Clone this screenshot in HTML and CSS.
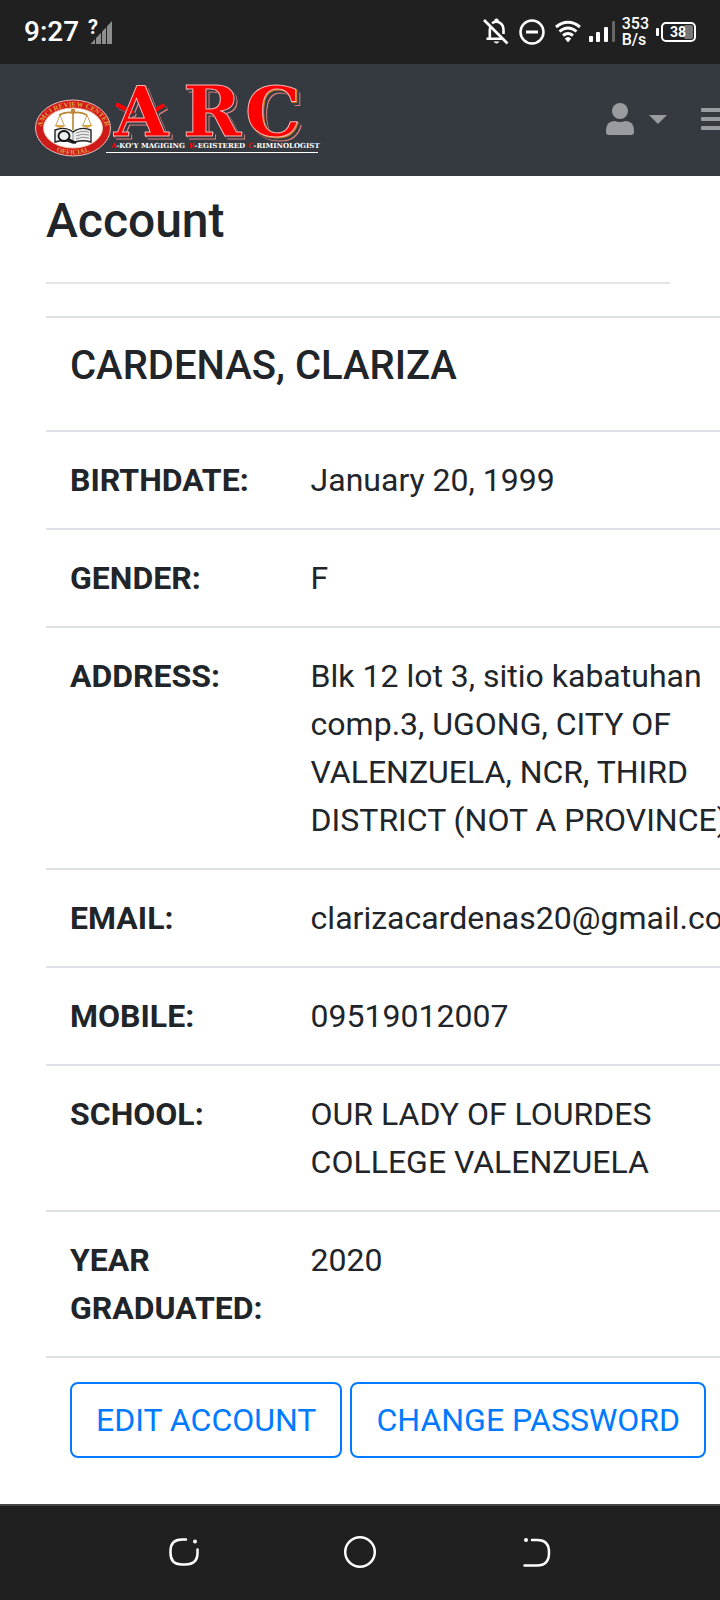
FILE: index.html
```html
<!DOCTYPE html>
<html lang="en">
<head>
<meta charset="utf-8">
<meta name="viewport" content="width=device-width, initial-scale=1">
<title>Account</title>
<link rel="stylesheet" href="styles.css">
</head>
<body>
<div class="status">
  <div class="status-group">
    <span class="clock">9:27</span>
    <svg width="24" height="26" viewBox="0 0 24 26" aria-hidden="true">
      <path d="M23 2V25H1.500Z" fill="#8d8d8d"/>
      <path d="M6.500 14V26M12.500 10V26M17.500 4V26" stroke="#202020" stroke-width="1"/>
      <text x="-1" y="15" class="signal-mark">?</text>
    </svg>
  </div>
  <div class="status-group status-right">
    <div class="status-group">
      <svg width="26" height="28" viewBox="0 0 26 28" fill="none" stroke="#fff" stroke-width="2.600" aria-hidden="true">
        <path d="M1 2 24.500 25.500"/>
        <path d="M3.500 20.800H19.500M6.800 20.500V12Q6.800 9.500 7.800 8M9 5.300Q13 2.300 17 4.800Q20.500 7 20.500 12V16"/>
        <path d="M11.500 3V1.500Q13.500-.5 15.500 1.500V4ZM10.500 23.500H16.500Q13.500 27.500 10.500 23.500Z" fill="#fff" stroke="none"/>
      </svg>
      <svg width="26" height="26" viewBox="0 0 26 26" fill="none" stroke="#fff" aria-hidden="true">
        <circle cx="13" cy="13" r="11.500" stroke-width="2.500"/><path d="M7 13H19" stroke-width="3"/>
      </svg>
      <svg width="26" height="22" viewBox="0 0 26 22" fill="none" stroke="#fff" stroke-width="2.900" aria-hidden="true">
        <path d="M1 6Q13-3.500 25 6M4.500 10.500Q13 3.500 21.500 10.500M8 14.500Q13 10.500 18 14.500"/>
        <path d="M9.800 17.500Q13 14.500 16.200 17.500L13 21.500Z" fill="#fff" stroke="none"/>
      </svg>
    </div>
    <svg width="27" height="22" viewBox="0 0 27 22" aria-hidden="true">
      <g fill="#fff"><rect x="1" y="15" width="4" height="6" rx="1"/><rect x="8" y="11" width="4" height="10" rx="1"/><rect x="16" y="6" width="4" height="15" rx="1"/></g>
      <rect x="24" y="0" width="3" height="21" rx="1" fill="#666"/>
    </svg>
    <div class="speed"><span>353</span><span>B/s</span></div>
    <svg width="40" height="20" viewBox="0 0 40 20" aria-hidden="true">
      <rect x="0" y="6" width="3" height="8" rx="1" fill="#fff"/>
      <rect x="28" y="3" width="9" height="14" rx="2" fill="#777"/>
      <rect x="6" y="1" width="33" height="18" rx="4" fill="none" stroke="#fff" stroke-width="2"/>
      <text x="22" y="15" class="battery-level">38</text>
    </svg>
  </div>
</div>

<header class="navbar">
  <a class="brand" href="#" aria-label="ARC home">
    <svg width="292" height="80" viewBox="0 -3 292 80">
      <defs>
        <path id="arc-top" d="M7.500 48A32 23.500 0 1 1 71.500 48"/>
        <path id="arc-bottom" d="M6 48A33 24.500 0 0 0 72 48"/>
      </defs>
      <ellipse cx="39" cy="46" rx="37.500" ry="28" fill="#cf1a1a" stroke="#e6c0c0"/>
      <ellipse cx="39" cy="46" rx="29.500" ry="20" fill="#fff" stroke="#f0c8b0" stroke-width="1"/>
      <text class="seal-text"><textPath href="#arc-top" startOffset="50%">AMCI REVIEW CENTER</textPath></text>
      <text class="seal-text"><textPath href="#arc-bottom" startOffset="50%">OFFICIAL</textPath></text>
      <g fill="none" stroke="#b98532" stroke-width="1.600">
        <path d="M39 28V48M25 33Q32 29 39 31Q46 29 53 33" />
        <path d="M26 33 22 43M26 33 30 43M53 33 49 43M53 33 57 43" stroke-width=".8"/>
        <path d="M20 43H32Q26 49 20 43ZM47 43H59Q53 49 47 43Z" fill="#d8a64b" stroke="none"/>
        <circle cx="39" cy="29" r="1.500"/>
      </g>
      <path d="M21 48Q31 44 39 50Q47 44 57 48V60Q47 57 39 61Q31 57 21 60Z" fill="#ededed" stroke="#222" stroke-width="1.400"/>
      <path d="M42 51Q48 48 55 50M42 54Q48 51 55 53M42 57Q48 54 55 56M39 50V61" fill="none" stroke="#777" stroke-width=".8"/>
      <ellipse cx="30" cy="54" rx="5.500" ry="5" fill="none" stroke="#111" stroke-width="1.800"/>
      <path d="M34 57 42 61" stroke="#111" stroke-width="2"/>
      <g class="mark">
        <path class="swash" d="M82 22 99 31M130 23 115 32"/>
        <text x="80" y="54">A</text>
        <text x="149" y="54">R</text>
        <text class="mark-last" x="211" y="54">C</text>
      </g>
      <g class="motto">
        <text x="77" y="66"><tspan class="initial">A</tspan>-KO'Y MAGIGING</text>
        <text x="155" y="66"><tspan class="initial">R</tspan>-EGISTERED</text>
        <text x="214" y="66"><tspan class="initial">C</tspan>-RIMINOLOGIST</text>
      </g>
      <path d="M72 70.500H284" stroke="#fff"/>
    </svg>
  </a>
  <div class="nav-actions">
    <button class="nav-button" type="button" aria-label="User menu">
      <svg width="28" height="32" viewBox="0 0 28 32" fill="currentColor" aria-hidden="true"><circle cx="14" cy="8" r="8"/><path d="M8.500 18Q14 20 19.500 18Q28 18.500 28 27V29Q28 32 25 32H3Q0 32 0 29V27Q0 18.500 8.500 18Z"/></svg>
      <svg width="18" height="9" viewBox="0 0 18 9" fill="currentColor" aria-hidden="true"><path d="M0 0H18L9 9Z"/></svg>
    </button>
    <button class="nav-button" type="button" aria-label="Open menu">
      <svg width="28" height="24" viewBox="0 0 28 24" fill="currentColor" aria-hidden="true"><rect y="1" width="28" height="4" rx="1"/><rect y="10" width="28" height="4" rx="1"/><rect y="19" width="28" height="4" rx="1"/></svg>
    </button>
  </div>
</header>

<main class="content">
  <h1 class="title">Account</h1>
  <hr class="rule">
  <table class="details">
    <tbody>
      <tr><td colspan="2"><h2 class="name">CARDENAS, CLARIZA</h2></td></tr>
      <tr><th scope="row">BIRTHDATE:</th><td>January 20, 1999</td></tr>
      <tr><th scope="row">GENDER:</th><td>F</td></tr>
      <tr><th scope="row">ADDRESS:</th><td>Blk 12 lot 3, sitio kabatuhan comp.3, UGONG, CITY OF VALENZUELA, NCR, THIRD DISTRICT (NOT A PROVINCE)</td></tr>
      <tr><th scope="row">EMAIL:</th><td>clarizacardenas20@gmail.com</td></tr>
      <tr><th scope="row">MOBILE:</th><td>09519012007</td></tr>
      <tr><th scope="row">SCHOOL:</th><td>OUR LADY OF LOURDES COLLEGE VALENZUELA</td></tr>
      <tr><th scope="row">YEAR GRADUATED:</th><td>2020</td></tr>
      <tr><td colspan="2"><div class="actions"><button class="btn" type="button">EDIT ACCOUNT</button><button class="btn" type="button">CHANGE PASSWORD</button></div></td></tr>
    </tbody>
  </table>
</main>

<nav class="system-nav" aria-label="System">
  <button class="system-button" type="button" aria-label="Recent apps">
    <svg width="36" height="36" viewBox="0 0 36 36" fill="none" stroke="#fff" stroke-width="2.500" stroke-linecap="round"><path d="M20 5.500H16Q4.500 5.500 4.500 17V19Q4.500 30.500 16 30.500H19Q31.500 30.500 31.500 19V15.500"/><circle cx="29" cy="7.500" r="2" fill="#fff" stroke="none"/></svg>
  </button>
  <button class="system-button" type="button" aria-label="Home">
    <svg width="36" height="36" viewBox="0 0 36 36" fill="none" stroke="#fff" stroke-width="2.500"><circle cx="18" cy="18" r="14.800"/></svg>
  </button>
  <button class="system-button" type="button" aria-label="Back">
    <svg width="36" height="36" viewBox="0 0 36 36" fill="none" stroke="#fff" stroke-width="2.500" stroke-linecap="round"><path d="M14 6H19Q31 6 31 18V19Q31 31.500 19 31.500H6.500"/><circle cx="8" cy="6" r="2" fill="#fff" stroke="none"/></svg>
  </button>
</nav>
</body>
</html>
```
FILE: styles.css
```css
* { box-sizing: border-box; }

body {
  margin: 0;
  min-height: 100vh;
  display: flex;
  flex-direction: column;
  overflow-x: hidden;
  background: #fff;
  color: #212529;
  font: 32px/48px Roboto, sans-serif;
}

svg { display: block; flex: none; overflow: visible; }

button { font: inherit; cursor: pointer; }

.status {
  display: flex;
  justify-content: space-between;
  align-items: center;
  height: 64px;
  padding: 0 24px;
  background: #202020;
  color: #fff;
}

.status-group { display: flex; align-items: center; gap: 10px; }
.status-right { gap: 7px; }
.clock { font-size: 28px; font-weight: 500; line-height: 32px; }
.signal-mark { fill: #fff; font-size: 20px; font-weight: 700; stroke: #202020; stroke-width: 2px; paint-order: stroke; }
.speed { display: flex; flex-direction: column; font-size: 16px; font-weight: 500; line-height: 16px; }
.battery-level { fill: #fff; font-size: 14px; font-weight: 700; text-anchor: middle; }

.navbar {
  display: flex;
  align-items: center;
  justify-content: space-between;
  height: 112px;
  padding: 0 0 2px 34px;
  background: #343a40;
}

.brand { display: block; }
.seal-text { font: 700 7px "Liberation Serif", serif; fill: #e0a040; text-anchor: middle; }
.mark {
  font: 700 70px "DejaVu Serif", serif;
  fill: #f00;
  stroke: #f3b0b0;
  stroke-width: 1px;
  filter: drop-shadow(2px 2px 0 #343a40) drop-shadow(1px 1px 0 #e08080);
}
.mark-last { filter: drop-shadow(1px 1px 0 #c07a20); }
.swash { stroke: #f00; stroke-width: 4px; }
.motto { font: 700 7px "DejaVu Serif", serif; fill: #fff; }
.initial { fill: #f00; }

.nav-actions { display: flex; align-items: center; gap: 34px; margin-right: -9px; }
.nav-button { display: flex; align-items: center; gap: 15px; padding: 0; border: 0; background: none; color: #999c9f; }

.content { flex: 1; padding: 16px 50px 20px 46px; }
.title { margin: 0 0 32px; font-size: 48px; font-weight: 500; line-height: 58px; }
.rule { height: 2px; margin: 0 0 32px; border: 0; background: #e5e5e5; }

.details { width: 100%; border-collapse: separate; border-spacing: 0; }
.details th,
.details td { padding: 24px; border-top: 2px solid #dee2e6; text-align: left; vertical-align: top; }
.details th { font-weight: 700; }
.name { margin: 0 0 16px; font-size: 40px; font-weight: 500; line-height: 48px; }

.actions { display: flex; gap: 8px; }
.btn {
  padding: 12px 24px;
  border: 2px solid #007bff;
  border-radius: 8px;
  background: transparent;
  color: #007bff;
  white-space: nowrap;
}

.system-nav {
  display: flex;
  justify-content: space-between;
  align-items: center;
  height: 96px;
  padding: 0 23% 2px;
  border-top: 2px solid #444;
  background: #202020;
}
.system-button { padding: 0; border: 0; background: none; }
```
